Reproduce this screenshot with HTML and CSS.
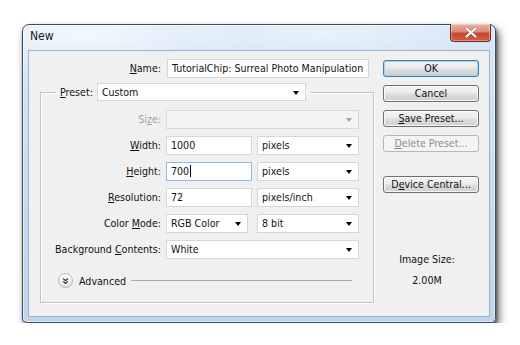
FILE: index.html
```html
<!DOCTYPE html>
<html>
<head>
<meta charset="utf-8">
<link rel="stylesheet" href="styles.css">
</head>
<body>
<div class="window">
  <div class="titlebar">
    <span class="title">New</span>
    <div class="close">
      <svg width="14" height="11" viewBox="0 0 14 11"><path d="M2.5 1.5 L11.5 9.5 M11.5 1.5 L2.5 9.5" stroke="#5a2420" stroke-width="3.4" stroke-linecap="round" opacity="0.35"/><path d="M2.5 1.5 L11.5 9.5 M11.5 1.5 L2.5 9.5" stroke="#fff" stroke-width="2.2" stroke-linecap="round"/></svg>
    </div>
  </div>
  <div class="client">
    <div class="main">
      <div class="name-row">
        <span class="lbl"><u>N</u>ame:</span>
        <div class="field input name">TutorialChip: Surreal Photo Manipulation</div>
      </div>
      <fieldset class="group">
        <legend class="preset-legend">
          <span class="preset-lbl"><u>P</u>reset:</span>
          <div class="field select preset">Custom<span class="arrow"></span></div>
        </legend>
        <div class="rows">
          <span class="lbl disabled">Si<u>z</u>e:</span>
          <div class="field select disabled-field span2"><span class="arrow grey"></span></div>

          <span class="lbl"><u>W</u>idth:</span>
          <div class="field input">1000</div>
          <div class="field select">pixels<span class="arrow"></span></div>

          <span class="lbl"><u>H</u>eight:</span>
          <div class="field input focus">700<span class="caret"></span></div>
          <div class="field select">pixels<span class="arrow"></span></div>

          <span class="lbl"><u>R</u>esolution:</span>
          <div class="field input">72</div>
          <div class="field select">pixels/inch<span class="arrow"></span></div>

          <span class="lbl">Color <u>M</u>ode:</span>
          <div class="field select mode">RGB Color<span class="arrow"></span></div>
          <div class="field select">8 bit<span class="arrow"></span></div>

          <span class="lbl">Background <u>C</u>ontents:</span>
          <div class="field select span2">White<span class="arrow"></span></div>
        </div>
        <div class="advanced">
          <span class="adv-icon">
            <svg width="14" height="14" viewBox="0 0 14 14"><path d="M4.5 4.3 L7 6.6 L9.5 4.3 M4.5 7.4 L7 9.7 L9.5 7.4" fill="none" stroke="#333" stroke-width="1.3"/></svg>
          </span>
          <span class="adv-text">Advanced</span>
          <span class="adv-line"></span>
        </div>
      </fieldset>
    </div>
    <div class="side">
      <div class="btn default">OK</div>
      <div class="btn">Cancel</div>
      <div class="btn"><u>S</u>ave Preset...</div>
      <div class="btn disabled-btn"><u>D</u>elete Preset...</div>
      <div class="btn device">D<u>e</u>vice Central...</div>
      <div class="image-size">
        <div>Image Size:</div>
        <div class="size-val">2.00M</div>
      </div>
    </div>
  </div>
</div>
</body>
</html>
```

FILE: styles.css
```css
html, body {
  margin: 0;
  padding: 0;
  background: #ffffff;
}
body {
  font-family: "DejaVu Sans Condensed", "DejaVu Sans", sans-serif;
  font-size: 10.6px;
  color: #111;
}
u { text-decoration: underline; text-underline-offset: 1px; }

.window {
  margin: 24px 0 0 22px;
  width: 474px;
  height: 299px;
  box-sizing: border-box;
  border: 1px solid #3f4b58;
  border-radius: 7px 7px 5px 5px;
  background:
    radial-gradient(ellipse 180px 40px at 60px 10px, rgba(255,255,255,0.7), rgba(255,255,255,0) 100%),
    radial-gradient(ellipse 160px 30px at 300px 8px, rgba(255,255,255,0.45), rgba(255,255,255,0) 100%),
    linear-gradient(180deg, #d8e8f8 0%, #c5dbf0 60%, #bcd4ec 100%);
  box-shadow: 3px 5px 8px rgba(0,0,0,0.6), 1px 2px 3px rgba(0,0,0,0.4), inset 0 0 0 1px rgba(255,255,255,0.55);
  padding: 0 5px 5px;
  display: flex;
  flex-direction: column;
}

.titlebar {
  height: 25px;
  margin: 0 -5px;
  padding: 0 4px 0 7px;
  display: flex;
  align-items: flex-start;
}
.title {
  font-family: "DejaVu Sans Condensed", "DejaVu Sans", sans-serif;
  font-size: 12px;
  color: #1b1b1b;
  line-height: 25px;
  margin-top: -1px;
}
.close {
  margin-left: auto;
  margin-top: -1px;
  width: 41px;
  height: 18px;
  box-sizing: border-box;
  border: 1px solid #6b2a22;
  border-top: none;
  border-radius: 0 0 4px 4px;
  background: linear-gradient(180deg, #eab0a3 0%, #dc8b78 45%, #c8462f 55%, #d2603f 100%);
  box-shadow: inset 0 0 0 1px rgba(255,255,255,0.35);
  display: flex;
  align-items: center;
  justify-content: center;
}

.client {
  height: 267px;
  box-sizing: border-box;
  border: 1px solid #9fb3c8;
  background: #f0f0f0;
  display: flex;
}

.main {
  width: 340px;
  display: flex;
  flex-direction: column;
}
.name-row {
  display: flex;
  align-items: center;
  margin-top: 8px;
  gap: 6px;
}
.name-row .lbl {
  width: 132px;
  text-align: right;
}
.lbl {
  text-align: right;
  white-space: nowrap;
  line-height: 19px;
}
.lbl.disabled { color: #a3a3a3; }

.field {
  box-sizing: border-box;
  height: 19px;
  line-height: 17px;
  border: 1px solid #d6d6d6;
  background: #fff;
  padding-left: 4px;
  position: relative;
  white-space: nowrap;
}
.input.name { width: 202px; }
.input.focus { border-color: #8fbbe3; }
.caret {
  display: inline-block;
  width: 1px;
  height: 12px;
  background: #000;
  vertical-align: -2px;
  margin-left: 1px;
}
.select .arrow {
  position: absolute;
  right: 6px;
  top: 7px;
  width: 0;
  height: 0;
  border-left: 3.5px solid transparent;
  border-right: 3.5px solid transparent;
  border-top: 4px solid #000;
}
.select .arrow.grey { border-top-color: #a5a5a5; }
.disabled-field {
  background: #f4f4f4;
  border-color: #dadada;
}

.group {
  margin: 5px 0 0 11px;
  width: 327px;
  height: 220px;
  box-sizing: border-box;
  border: 1px solid #c4c4c4;
  box-shadow: inset 1px 1px 0 #fff, 1px 1px 0 #fff;
  padding: 0 14px 0 0;
  display: flex;
  flex-direction: column;
}
.preset-legend {
  margin-left: 15px;
  padding: 0 4px 0 4px;
  display: flex;
  align-items: center;
  gap: 4px;
}
.preset-lbl { line-height: 18px; }
.select.preset { width: 209px; height: 18px; }

.rows {
  margin-top: 9px;
  display: grid;
  grid-template-columns: 120px 86px 102px;
  grid-auto-rows: 19px;
  column-gap: 5px;
  row-gap: 7px;
  align-items: center;
}
.span2 { grid-column: 2 / span 2; }
.select.mode { width: 82px; }

.advanced {
  margin-top: 14px;
  display: flex;
  align-items: center;
  margin-left: 17px;
  margin-right: 7px;
}
.adv-icon {
  width: 15px;
  height: 15px;
  box-sizing: border-box;
  border: 1px solid #b8b8b8;
  border-radius: 50%;
  background: linear-gradient(180deg, #ffffff 0%, #e4e4e4 100%);
  display: flex;
  align-items: center;
  justify-content: center;
}
.adv-text { margin-left: 6px; }
.adv-line {
  flex: 1;
  height: 1px;
  background: #a8a8a8;
  margin-left: 5px;
}

.side {
  margin-left: 14px;
  width: 96px;
  padding-top: 9px;
  display: flex;
  flex-direction: column;
}
.btn {
  height: 17px;
  box-sizing: border-box;
  border: 1px solid #707070;
  border-radius: 3px;
  background: linear-gradient(180deg, #f3f3f3 0%, #ebebeb 48%, #dddddd 52%, #d0d0d0 100%);
  box-shadow: inset 0 0 0 1px rgba(255,255,255,0.8);
  text-align: center;
  line-height: 15px;
  margin-bottom: 8px;
  white-space: nowrap;
}
.btn.default {
  border-color: #3c7fb1;
  box-shadow: inset 0 0 0 1px #9fd5f5;
}
.btn.disabled-btn {
  border-color: #b5b8ba;
  background: #f4f4f4;
  color: #8d8d8d;
  box-shadow: none;
}
.btn.device { margin-top: 16px; }
.image-size {
  margin-top: 51px;
  text-align: center;
  margin-right: 8px;
  line-height: 14px;
}
.size-val { margin-top: 7px; }
```
